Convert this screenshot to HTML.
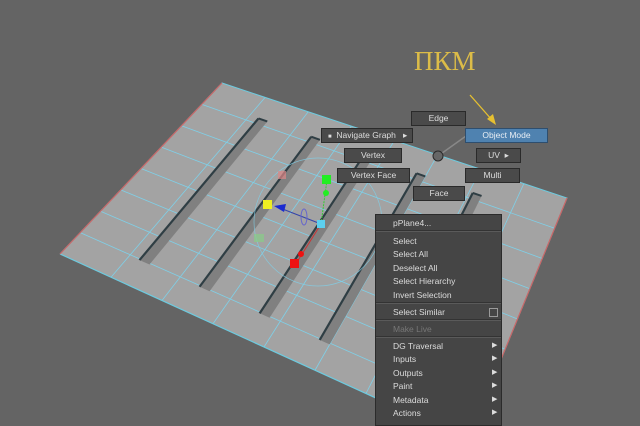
<!DOCTYPE html>
<html><head><meta charset="utf-8"><style>
body{margin:0;width:640px;height:414px;overflow:hidden;background:#646464;position:relative;font-family:"Liberation Sans",sans-serif}
svg{position:absolute;left:0;top:0}
.b{position:absolute;height:13px;background:#4a4a4a;border:1px solid #2a2a2a;color:#ddd;font-size:8.5px;line-height:13px;text-align:center;box-sizing:content-box}
.menu{position:absolute;left:375px;top:214px;width:125px;height:210px;background:#454545;border:1px solid #2b2b2b;color:#dcdcdc;font-size:8.5px}
.menu div{position:absolute;left:17px}
.sep{position:absolute;left:0!important;width:125px;height:1px;background:#5a5a5a;border-top:1px solid #333}
.ar{position:absolute;left:116px!important;font-size:7px;color:#ddd}
</style></head><body>
<svg id="s" width="640" height="414"></svg>
<div style="position:absolute;left:414px;top:46px;font-family:'Liberation Serif',serif;font-size:27px;color:#dcbc48">ПКМ</div>
<div class="b" style="left:411px;top:111px;width:53px">Edge</div>
<div class="b" style="left:321px;top:128px;width:90px;text-align:left"><span style="margin-left:6px;font-size:6px">■</span>&nbsp;&nbsp;Navigate Graph&nbsp;&nbsp;&nbsp;▸</div>
<div class="b" style="left:465px;top:128px;width:81px;background:#4f82b0;border-color:#2e4e6e;color:#e8eef4">Object Mode</div>
<div class="b" style="left:344px;top:148px;width:56px">Vertex</div>
<div class="b" style="left:476px;top:148px;width:43px">UV&nbsp;&nbsp;▸</div>
<div class="b" style="left:337px;top:168px;width:71px">Vertex Face</div>
<div class="b" style="left:465px;top:168px;width:53px">Multi</div>
<div class="b" style="left:413px;top:186px;width:50px">Face</div>
<div class="menu">
<div style="top:3px">pPlane4...</div>
<div class="sep" style="top:15px"></div>
<div style="top:21px">Select</div>
<div style="top:34px">Select All</div>
<div style="top:48px">Deselect All</div>
<div style="top:61px">Select Hierarchy</div>
<div style="top:75px">Invert Selection</div>
<div class="sep" style="top:87px"></div>
<div style="top:92px">Select Similar</div>
<div style="top:93px;left:113px;width:7px;height:7px;border:1px solid #999"></div>
<div class="sep" style="top:104px"></div>
<div style="top:109px;color:#777">Make Live</div>
<div class="sep" style="top:121px"></div>
<div style="top:126px">DG Traversal</div><div class="ar" style="top:126px">▶</div>
<div style="top:139px">Inputs</div><div class="ar" style="top:139px">▶</div>
<div style="top:153px">Outputs</div><div class="ar" style="top:153px">▶</div>
<div style="top:166px">Paint</div><div class="ar" style="top:166px">▶</div>
<div style="top:180px">Metadata</div><div class="ar" style="top:180px">▶</div>
<div style="top:193px">Actions</div><div class="ar" style="top:193px">▶</div>
</div>
<script>
var TL=[222,83],TR=[567,198],BR=[468,440],BL=[60,254];
function P(u,v){return [(1-u)*(1-v)*TL[0]+u*(1-v)*TR[0]+u*v*BR[0]+(1-u)*v*BL[0],(1-u)*(1-v)*TL[1]+u*(1-v)*TR[1]+u*v*BR[1]+(1-u)*v*BL[1]];}
function pt(a){return a[0].toFixed(1)+','+a[1].toFixed(1);}
var h='<polygon points="'+pt(TL)+' '+pt(TR)+' '+pt(BR)+' '+pt(BL)+'" fill="#a3a3a3"/>';
for(var i=1;i<8;i++){var u=i/8;h+='<line x1="'+P(u,0)[0]+'" y1="'+P(u,0)[1]+'" x2="'+P(u,1)[0]+'" y2="'+P(u,1)[1]+'" stroke="#7fd0e8" stroke-width="0.8"/>';}
for(var i=1;i<8;i++){var v=i/8;h+='<line x1="'+P(0,v)[0]+'" y1="'+P(0,v)[1]+'" x2="'+P(1,v)[0]+'" y2="'+P(1,v)[1]+'" stroke="#7fd0e8" stroke-width="0.8"/>';}
h+='<polyline points="'+pt(BL)+' '+pt(TL)+' '+pt(TR)+' '+pt(BR)+'" fill="none" stroke="#6ccbe0" stroke-width="1"/>';
h+='<line x1="'+BL[0]+'" y1="'+BL[1]+'" x2="'+BR[0]+'" y2="'+BR[1]+'" stroke="#6ccbe0" stroke-width="1.2"/>';
h+='<line x1="'+TL[0]+'" y1="'+TL[1]+'" x2="'+BL[0]+'" y2="'+BL[1]+'" stroke="#c66" stroke-width="1.2"/>';
h+='<line x1="'+TR[0]+'" y1="'+TR[1]+'" x2="'+BR[0]+'" y2="'+BR[1]+'" stroke="#c66" stroke-width="1.2"/>';
var us=[0.15,0.3,0.45,0.6,0.76];
us.forEach(function(u){var a=P(u,0.1),b=P(u+0.025,0.1),c=P(u+0.025,0.88),d=P(u,0.88);
h+='<polygon points="'+pt(a)+' '+pt(b)+' '+pt(c)+' '+pt(d)+'" fill="#808080"/>';
h+='<line x1="'+a[0]+'" y1="'+a[1]+'" x2="'+d[0]+'" y2="'+d[1]+'" stroke="#2f3e44" stroke-width="2.2"/>';
h+='<line x1="'+a[0]+'" y1="'+a[1]+'" x2="'+b[0]+'" y2="'+b[1]+'" stroke="#2f3e44" stroke-width="2"/>';});
h+='<circle cx="318" cy="222" r="64" fill="none" stroke="#7fd0e8" stroke-width="0.7" opacity="0.8"/>';
h+='<line x1="321" y1="224" x2="280" y2="208" stroke="#3344aa" stroke-width="1"/><polygon points="274,206 286,204 284,212" fill="#1a2ad0"/>';
h+='<line x1="321" y1="224" x2="327" y2="180" stroke="#3c3" stroke-width="1" stroke-dasharray="2,1"/><rect x="322" y="175" width="9" height="9" fill="#2e2"/><circle cx="326" cy="193" r="3" fill="#2e2"/>';
h+='<line x1="321" y1="224" x2="297" y2="262" stroke="#c33" stroke-width="1"/><rect x="290" y="259" width="9" height="9" fill="#e11"/><circle cx="301" cy="254" r="3" fill="#e11"/>';
h+='<rect x="263" y="200" width="9" height="9" fill="#ee2"/><rect x="317" y="220" width="8" height="8" fill="#5cd0f0"/>';
h+='<rect x="278" y="171" width="8" height="8" fill="#d88" opacity="0.7"/><rect x="254" y="234" width="10" height="8" fill="#8c8" opacity="0.7"/>';
h+='<ellipse cx="304" cy="217" rx="3" ry="8" fill="none" stroke="#66c" stroke-width="1"/>';
h+='<line x1="438" y1="156" x2="466" y2="136" stroke="#888" stroke-width="1.5"/><circle cx="438" cy="156" r="5" fill="#666" stroke="#2a2a2a"/>';
h+='<line x1="470" y1="95" x2="492" y2="120" stroke="#e6c030" stroke-width="1.3"/><polygon points="496,125 487,119 493,114" fill="#e6c030"/>';
document.getElementById('s').innerHTML=h;
</script>
</body></html>
